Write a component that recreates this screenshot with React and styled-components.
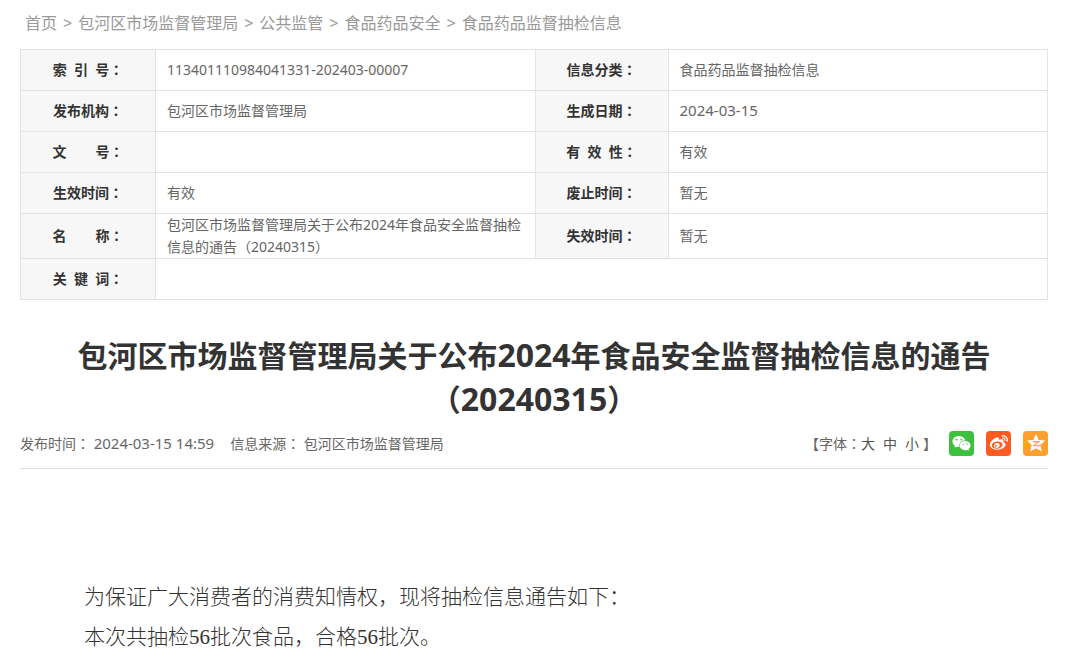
import styled, { createGlobalStyle } from "styled-components";
import { FaWeixin, FaWeibo } from "react-icons/fa";

const GlobalStyle = createGlobalStyle`
  body {
    margin: 0;
    background: #fff;
    color: #666;
    font-family: "Noto Sans", "Noto Sans CJK SC", sans-serif;
    font-size: 14px;
    line-height: 22px;
  }
`;

const Container = styled.div`
  padding: 8px 17px 0 20px;
`;

const Breadcrumb = styled.nav`
  padding-left: 5px;
  margin-bottom: 10px;
  font-size: 16px;
  line-height: 31px;
  color: #999;
  a {
    color: #999;
    text-decoration: none;
  }
`;

const Separator = styled.span`
  margin: 0 6px;
`;

const InfoTable = styled.table`
  width: 100%;
  table-layout: fixed;
  border-collapse: collapse;
`;

const LabelCol = styled.col`
  width: ${(props) => props.$width}px;
`;

const Label = styled.th`
  height: 40px;
  padding: 0;
  border: 1px solid #e3e3e3;
  background: #f7f7f7;
  color: #333;
  font-weight: bold;
  text-align: center;
`;

const Value = styled.td`
  padding: 0 8px 0 11px;
  border: 1px solid #e3e3e3;
  color: #666;
`;

// 冒号居中显示
const Colon = styled.span`
  font-family: "Noto Sans", "Noto Sans CJK TC", sans-serif;
`;

const DateText = styled.span`
  font-size: 15px;
  line-height: 1;
`;

const Title = styled.h1`
  margin: 34px 0 0;
  color: #333;
  font-size: 30px;
  font-weight: bold;
  line-height: 44px;
  text-align: center;
`;

const TitleNumber = styled.span`
  font-size: 32px;
  line-height: 1;
`;

const Meta = styled.div`
  display: flex;
  justify-content: space-between;
  align-items: center;
  height: 46px;
  border-bottom: 1px solid #ddd;
`;

const MetaInfo = styled.div`
  display: flex;
  gap: 16px;
  padding-bottom: 2px;
`;

const MetaTools = styled.div`
  display: flex;
  align-items: center;
  padding-bottom: 2px;
`;

const FontSizes = styled.div`
  display: flex;
  align-items: center;
  margin-right: 12px;
`;

const SizeButton = styled.button`
  margin-right: 8px;
  padding: 0;
  border: none;
  background: none;
  color: #555;
  font: inherit;
  cursor: pointer;
  &:last-of-type {
    margin-right: 4px;
  }
`;

const ShareList = styled.div`
  display: flex;
  gap: 12px;
  padding-bottom: 2px;
`;

const ShareButton = styled.button`
  display: flex;
  justify-content: center;
  align-items: center;
  width: 25px;
  height: 25px;
  padding: 0;
  border: none;
  border-radius: 4px;
  background: ${(props) => props.$color};
  color: #fff;
  cursor: pointer;
`;

const Article = styled.article`
  padding: 108px 64px 0;
  color: #333;
  font-family: "Liberation Serif", "Noto Sans CJK SC", serif;
  font-size: 21px;
  font-weight: 300;
  line-height: 40px;
  p {
    margin: 0;
  }
`;

const crumbs = ["首页", "包河区市场监督管理局", "公共监管", "食品药品安全", "食品药品监督抽检信息"];

const rows = [
  ["索\u00a0\u00a0引\u00a0\u00a0号", "113401110984041331-202403-00007", "信息分类", "食品药品监督抽检信息"],
  ["发布机构", "包河区市场监督管理局", "生成日期", <DateText key="date">2024-03-15</DateText>],
  ["文" + "\u00a0".repeat(8) + "号", "", "有\u00a0\u00a0效\u00a0\u00a0性", "有效"],
  ["生效时间", "有效", "废止时间", "暂无"],
  [
    "名" + "\u00a0".repeat(8) + "称",
    "包河区市场监督管理局关于公布2024年食品安全监督抽检信息的通告（20240315）",
    "失效时间",
    "暂无",
  ],
];

const QzoneIcon = () => (
  <svg width="20" height="20" viewBox="0 0 24 24" aria-hidden="true">
    <path
      fill="#fff"
      d="M12 1l3.2 7.3 7.8.8-5.800 5.300 1.700 7.800L12 18.200l-6.900 4 1.700-7.800L1 9.100l7.800-.8z"
    />
    <path fill="none" stroke="#ff9f2e" strokeWidth="1.300" d="M8 10.300h7.400l-6 4.700q4 .8 8.600-.6" />
  </svg>
);

const App = () => {
  return (
    <>
      <GlobalStyle />
      <Container>
        <Breadcrumb>
          {crumbs.map((name, index) => (
            <span key={name}>
              {index > 0 && <Separator>&gt;</Separator>}
              <a href="#">{name}</a>
            </span>
          ))}
        </Breadcrumb>
        <InfoTable>
          <colgroup>
            <LabelCol $width={135} />
            <col />
            <LabelCol $width={133} />
            <col />
          </colgroup>
          <tbody>
            {rows.map(([label, value, label2, value2]) => (
              <tr key={label}>
                <Label scope="row">{label}<Colon>：</Colon></Label>
                <Value>{value}</Value>
                <Label scope="row">{label2}<Colon>：</Colon></Label>
                <Value>{value2}</Value>
              </tr>
            ))}
            <tr>
              <Label scope="row">关&nbsp;&nbsp;键&nbsp;&nbsp;词<Colon>：</Colon></Label>
              <Value colSpan={3} />
            </tr>
          </tbody>
        </InfoTable>
        <Title>
          包河区市场监督管理局关于公布<TitleNumber>2024</TitleNumber>年食品安全监督抽检信息的通告
          （<TitleNumber>20240315</TitleNumber>）
        </Title>
        <Meta>
          <MetaInfo>
            <span>发布时间<Colon>：</Colon> <DateText>2024-03-15 14:59</DateText></span>
            <span>信息来源<Colon>：</Colon> 包河区市场监督管理局</span>
          </MetaInfo>
          <MetaTools>
            <FontSizes>
              【字体<Colon>：</Colon>
              <SizeButton type="button">大</SizeButton>
              <SizeButton type="button">中</SizeButton>
              <SizeButton type="button">小</SizeButton>
              】
            </FontSizes>
            <ShareList>
              <ShareButton type="button" aria-label="微信" $color="#3dc03d"><FaWeixin size={19} /></ShareButton>
              <ShareButton type="button" aria-label="微博" $color="#ff5a1f"><FaWeibo size={18} /></ShareButton>
              <ShareButton type="button" aria-label="QQ空间" $color="#ff9f2e"><QzoneIcon /></ShareButton>
            </ShareList>
          </MetaTools>
        </Meta>
        <Article>
          <p>为保证广大消费者的消费知情权，现将抽检信息通告如下：</p>
          <p>本次共抽检56批次食品，合格56批次。</p>
        </Article>
      </Container>
    </>
  );
};

export default App;
